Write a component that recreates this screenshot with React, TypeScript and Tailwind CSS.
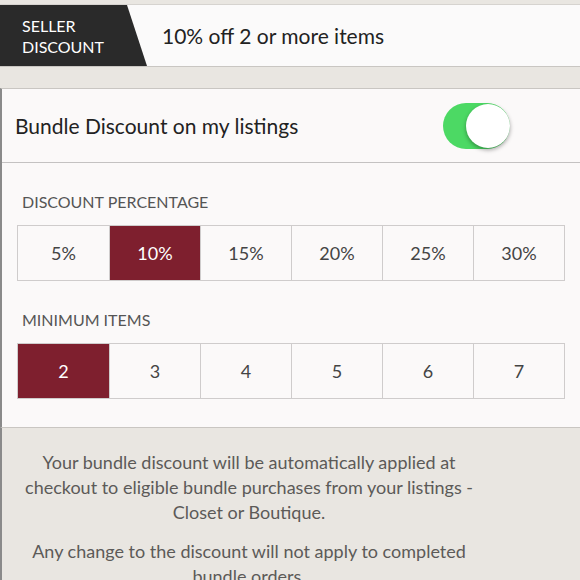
const percents = ["5%", "10%", "15%", "20%", "25%", "30%"];
const items = ["2", "3", "4", "5", "6", "7"];

const Segmented = ({ options, selected }: { options: string[]; selected: string }) => (
    <div className="mx-[15px] grid grid-cols-6 border border-[#cfcccc]">
        {options.map((opt, i) => (
            <div
                key={opt}
                className={
                    "h-[54px] flex items-center justify-center text-[18px] " +
                    (i > 0 ? "border-l border-[#cfcccc] " : "") +
                    (opt === selected ? "bg-[#7e1f2e] text-white" : "text-[#444]")
                }
            >
                {opt}
            </div>
        ))}
    </div>
);

const App = () => {
    return (
        <div className="w-[580px] h-[580px] overflow-hidden bg-[#e9e6e1] font-['Lato',sans-serif]">
            <div className="h-[5px] border-b border-[#d6d3cf]" />
            <div className="h-[62px] flex items-center bg-[#fbfafa] border-b border-[#c9c6c2]">
                <div className="h-full w-[147px] bg-[#2a2a2a] [clip-path:polygon(0_0,127px_0,147px_100%,0_100%)] flex flex-col justify-center pl-[22px] text-white text-[16px] leading-[21px]">
                    <span>SELLER</span>
                    <span>DISCOUNT</span>
                </div>
                <div className="ml-[15px] text-[21px] text-[#222]">10% off 2 or more items</div>
            </div>
            <div className="h-[21px]" />
            <div className="bg-[#fbf9f9] border-y border-[#c9c6c2] border-l-2 border-l-[#8a8a8a] pb-[28px]">
                <div className="h-[74px] flex items-center justify-between pl-[13px] pr-[70px] border-b border-[#c4c2c2]">
                    <span className="text-[21px] text-[#222]">Bundle Discount on my listings</span>
                    <div className="w-[67px] h-[46px] rounded-full bg-[#4cd964] flex items-center justify-end">
                        <div className="w-[44px] h-[44px] rounded-full bg-white shadow-[0_2px_4px_rgba(0,0,0,0.35)]" />
                    </div>
                </div>
                <div className="px-[20px] pt-[29px] pb-[13px] text-[16px] text-[#555] leading-[20px]">DISCOUNT PERCENTAGE</div>
                <Segmented options={percents} selected="10%" />
                <div className="px-[20px] pt-[29px] pb-[13px] text-[16px] text-[#555] leading-[20px]">MINIMUM ITEMS</div>
                <Segmented options={items} selected="2" />
            </div>
            <div className="pl-[20px] pr-[104px] pt-[22px] text-center text-[18px] leading-[25px] text-[#5c5a58] border-l-2 border-l-[#8a8a8a] h-full">
                <p>
                    Your bundle discount will be automatically applied at checkout to eligible bundle purchases from your listings - Closet or Boutique.
                </p>
                <p className="mt-[14px]">
                    Any change to the discount will not apply to completed bundle orders.
                </p>
            </div>
        </div>
    );
};

export default App;
